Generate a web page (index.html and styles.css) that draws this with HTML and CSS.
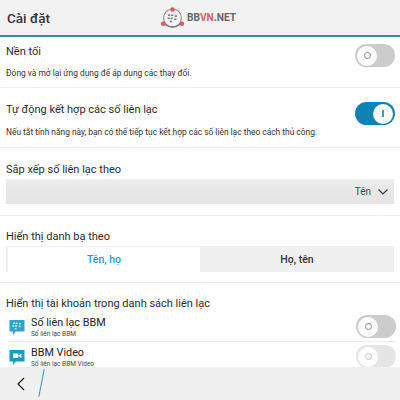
FILE: index.html
```html
<!DOCTYPE html>
<html lang="vi">
<head>
  <meta charset="UTF-8">
  <meta name="viewport" content="width=device-width, initial-scale=1.0">
  <title>Cài đặt</title>
  <link rel="stylesheet" href="styles.css">
</head>
<body>
  <div class="page">
    <header class="title-bar">
      <h1>Cài đặt</h1>
      <div class="logo">
        <svg width="25" height="26" viewBox="0 0 28 28">
          <circle cx="14" cy="14" r="10" fill="none" stroke="#8a8a8a" stroke-width="1.2"/>
          <path d="M5 21 Q14 27 23 21" fill="none" stroke="#777" stroke-width="1.6"/>
          <circle cx="14" cy="4.5" r="2.6" fill="#e0566a"/>
          <circle cx="3.5" cy="20.5" r="2.6" fill="#e0566a"/>
          <circle cx="24.5" cy="20.5" r="2.6" fill="#e0566a"/>
          <g fill="#777">
            <rect x="9" y="10" width="2.4" height="1.8"/>
            <rect x="12.5" y="10" width="2.4" height="1.8"/>
            <rect x="16.5" y="11" width="2.4" height="1.8"/>
            <rect x="8.5" y="13.5" width="2.4" height="1.8"/>
            <rect x="12" y="13.5" width="2.4" height="1.8"/>
            <rect x="16" y="14.5" width="2.4" height="1.8"/>
            <rect x="11" y="17" width="2.4" height="1.8"/>
          </g>
        </svg>
        <span class="logo-text">BB<em>VN</em>.NET</span>
      </div>
    </header>

    <main class="content">
      <section class="setting toggle-row first">
        <div class="setting-text">
          <div class="label">Nền tối</div>
          <div class="desc">Đóng và mở lại ứng dụng để áp dụng các thay đổi.</div>
        </div>
        <div class="toggle"><span class="knob"><i class="ring"></i></span></div>
      </section>

      <section class="setting toggle-row second">
        <div class="setting-text">
          <div class="label">Tự động kết hợp các số liên lạc</div>
          <div class="desc">Nếu tắt tính năng này, bạn có thể tiếp tục kết hợp các số liên lạc theo cách thủ công.</div>
        </div>
        <div class="toggle on"><span class="knob"><i class="bar"></i></span></div>
      </section>

      <section class="setting sort">
        <div class="label">Sắp xếp số liên lạc theo</div>
        <div class="dropdown">
          <span>Tên</span>
          <svg width="10" height="6" viewBox="0 0 10 6"><path d="M.5.5L5 5 9.500.5" fill="none" stroke="#333" stroke-width="1.1"/></svg>
        </div>
      </section>

      <section class="setting">
        <div class="label">Hiển thị danh bạ theo</div>
        <div class="segments">
          <div class="segment active">Tên, họ</div>
          <div class="segment">Họ, tên</div>
        </div>
      </section>

      <section class="setting accounts">
        <div class="label">Hiển thị tài khoản trong danh sách liên lạc</div>
        <div class="account">
          <svg class="account-icon" width="16" height="15" viewBox="0 1 17 17">
            <path d="M0 1h17v13H7l-3 4v-4H0z" fill="#2aa5cf"/>
            <g fill="#fff">
              <rect x="4" y="4" width="2" height="1.5"/><rect x="7" y="4" width="2" height="1.5"/><rect x="11" y="4.500" width="2" height="1.5"/>
              <rect x="3.500" y="7" width="2" height="1.5"/><rect x="6.500" y="7" width="2" height="1.5"/><rect x="10.500" y="7.500" width="2" height="1.5"/>
              <rect x="6" y="10" width="2" height="1.5"/>
            </g>
          </svg>
          <div class="setting-text">
            <div class="account-name">Số liên lạc BBM</div>
            <div class="account-sub">Số liên lạc BBM</div>
          </div>
          <div class="toggle"><span class="knob"><i class="ring"></i></span></div>
        </div>
        <div class="account">
          <svg class="account-icon" width="16" height="15" viewBox="0 1 17 17">
            <path d="M0 1h17v13H7l-3 4v-4H0z" fill="#1c9bc6"/>
            <path d="M4 5h6v5H4zM10.500 7l3-2v5l-3-2z" fill="#fff"/>
          </svg>
          <div class="setting-text">
            <div class="account-name">BBM Video</div>
            <div class="account-sub">Số liên lạc BBM Video</div>
          </div>
          <div class="toggle faded"><span class="knob"><i class="ring"></i></span></div>
        </div>
      </section>
    </main>

    <footer class="action-bar">
      <svg class="back" width="9" height="14" viewBox="0 0 9 14"><path d="M8 1L2 7l6 6" fill="none" stroke="#222" stroke-width="1.3"/></svg>
      <span class="slash"></span>
    </footer>
  </div>
</body>
</html>
```

FILE: styles.css
```css
body {
  margin: 0;
  font-family: Roboto, "Noto Sans", sans-serif;
  color: #222;
  background: #fff;
}
.page {
  width: 400px;
  height: 400px;
  display: flex;
  flex-direction: column;
  overflow: hidden;
}
.title-bar {
  flex: none;
  height: 35px;
  display: flex;
  align-items: center;
  background: #f2f2f2;
  border-bottom: 2px solid #3f8b9c;
  padding-left: 7px;
}
h1 {
  margin: 0;
  width: 153px;
  font-size: 13.5px;
  font-weight: 500;
  color: #333;
}
.logo {
  display: flex;
  align-items: center;
  gap: 2px;
}
.logo-text {
  font-size: 10.2px;
  font-weight: 700;
  color: #666;
}
.logo-text em {
  font-style: normal;
  color: #d9606e;
}
.content {
  flex: 1;
  overflow: hidden;
}
.setting {
  padding: 12px 6px 10px;
  border-bottom: 1px solid #ececec;
}
.toggle-row {
  display: flex;
  align-items: flex-start;
  justify-content: space-between;
}
.toggle-row.first {
  padding: 6px 6px 8px;
}
.toggle-row.second {
  padding: 13px 6px 9px;
}
.toggle-row .toggle {
  margin-top: 1px;
}
.toggle-row .desc {
  margin-top: 8px;
}
.toggle-row.second .desc {
  margin-top: 9px;
}
.sort {
  padding: 13px 6px 11px;
}
.label {
  font-size: 11px;
  line-height: 17px;
  color: #2b2b2b;
}
.desc {
  font-size: 8.4px;
  line-height: 11px;
  color: #333;
}
.toggle {
  flex: none;
  width: 40px;
  height: 23px;
  border-radius: 12px;
  background: #cccccc;
  display: flex;
  align-items: center;
  margin-right: -1px;
}
.toggle .knob {
  width: 20px;
  height: 20px;
  margin-left: 2px;
  border-radius: 50%;
  background: #fff;
  display: flex;
  align-items: center;
  justify-content: center;
}
.toggle.on {
  background: #0b83b5;
  justify-content: flex-end;
}
.toggle.on .knob {
  margin: 0 2px 0 0;
}
.toggle.faded {
  opacity: 0.5;
}
.ring {
  width: 5px;
  height: 5px;
  border: 1px solid #888;
  border-radius: 50%;
}
.bar {
  width: 2px;
  height: 7px;
  background: #3a9cc6;
}
.dropdown {
  margin-top: 1px;
  height: 25px;
  background: linear-gradient(#ededed, #e3e3e3);
  display: flex;
  align-items: center;
  justify-content: flex-end;
  gap: 7px;
  padding-right: 6px;
  font-size: 10px;
  color: #444;
}
.segments {
  margin-top: 1px;
  display: flex;
  height: 26px;
  background: #f0f0f0;
  padding: 1px 0 0 2px;
  box-sizing: border-box;
}
.segment {
  flex: 1;
  display: flex;
  align-items: center;
  justify-content: center;
  font-size: 10.5px;
  font-weight: 500;
  color: #333;
}
.segment.active {
  flex: none;
  width: 192px;
  background: #fff;
  color: #2a9ac4;
}
.accounts {
  padding-bottom: 0;
  border-bottom: none;
}
.account {
  display: flex;
  align-items: center;
  height: 29px;
  border-bottom: 1px solid #ececec;
  margin: 0 -1px 0 3px;
}
.account:last-child {
  border-bottom: none;
}
.account-icon {
  flex: none;
  margin: 2px 6px 0 0;
}
.account .setting-text {
  flex: 1;
}
.account-name {
  font-size: 10.8px;
  line-height: 14px;
}
.account-sub {
  font-size: 6.5px;
  line-height: 8px;
  color: #444;
}
.action-bar {
  flex: none;
  height: 33px;
  background: #f0f0f0;
  display: flex;
  align-items: center;
  position: relative;
  padding-left: 16px;
}
.slash {
  position: absolute;
  left: 41px;
  top: 2px;
  width: 1px;
  height: 28px;
  background: #3a8fb5;
  transform: rotate(11deg);
}
```
